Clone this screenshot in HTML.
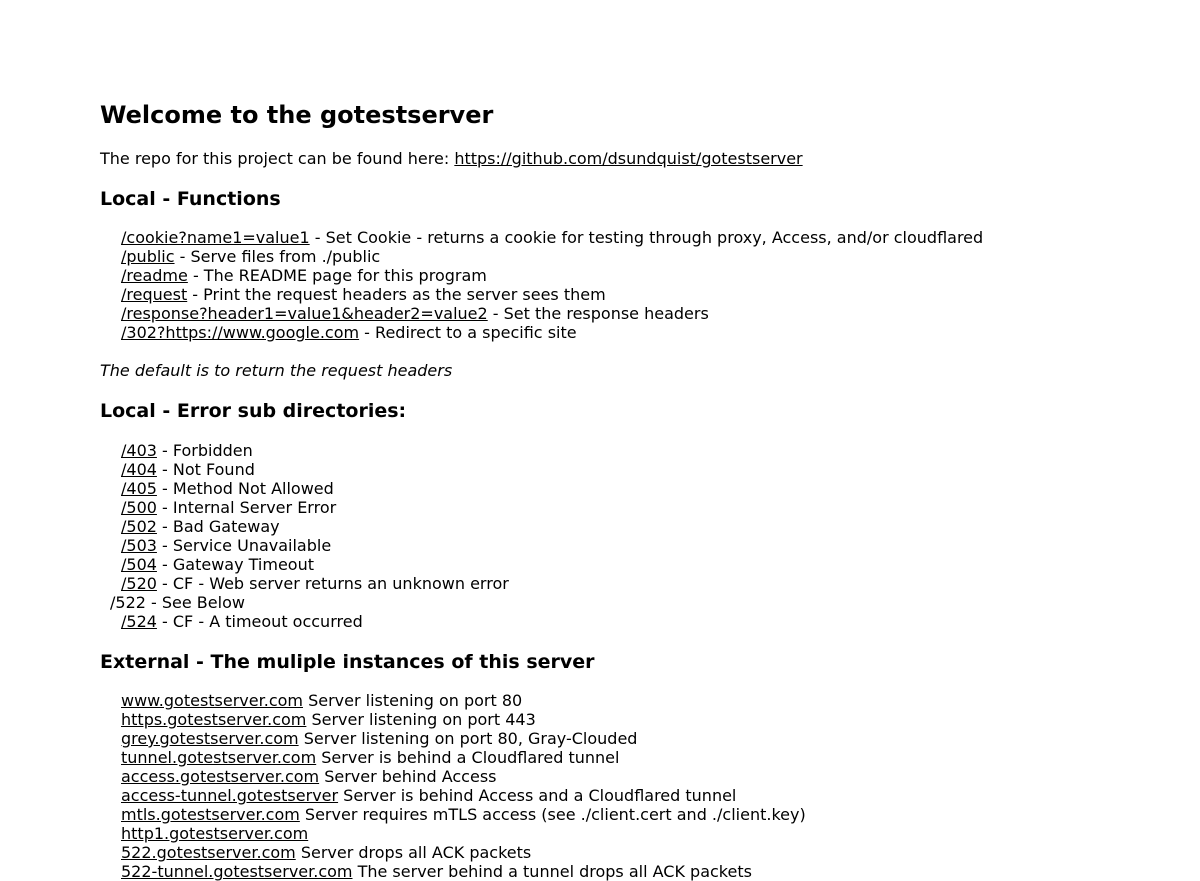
<!DOCTYPE html>
<html><head><meta charset="utf-8"><style>
body{margin:0;background:#fff;font-family:"DejaVu Sans","Liberation Sans",sans-serif;font-size:16px;color:#000;width:1200px;height:881px;overflow:hidden;position:relative}
.b{position:absolute;left:100px;line-height:19px;white-space:nowrap}
h1{font-size:24px;line-height:28px;margin:0}
h3{font-size:19px;line-height:22px;margin:0}
a{color:#000;text-decoration:underline}
.l{padding-left:21px}
</style></head><body>
<div class="b" style="top:101px"><h1>Welcome to the gotestserver</h1></div>
<div class="b" style="top:149px">The repo for this project can be found here: <a href="#">https://github.com/dsundquist/gotestserver</a></div>
<div class="b" style="top:188px"><h3>Local - Functions</h3></div>
<div class="b l" style="top:228px">
<a href="#">/cookie?name1=value1</a> - Set Cookie - returns a cookie for testing through proxy, Access, and/or cloudflared<br>
<a href="#">/public</a> - Serve files from ./public<br>
<a href="#">/readme</a> - The README page for this program<br>
<a href="#">/request</a> - Print the request headers as the server sees them<br>
<a href="#">/response?header1=value1&amp;header2=value2</a> - Set the response headers<br>
<a href="#">/302?https://www.google.com</a> - Redirect to a specific site</div>
<div class="b" style="top:361px"><i>The default is to return the request headers</i></div>
<div class="b" style="top:400px"><h3>Local - Error sub directories:</h3></div>
<div class="b l" style="top:441px">
<a href="#">/403</a> - Forbidden<br>
<a href="#">/404</a> - Not Found<br>
<a href="#">/405</a> - Method Not Allowed<br>
<a href="#">/500</a> - Internal Server Error<br>
<a href="#">/502</a> - Bad Gateway<br>
<a href="#">/503</a> - Service Unavailable<br>
<a href="#">/504</a> - Gateway Timeout<br>
<a href="#">/520</a> - CF - Web server returns an unknown error<br>
<span style="margin-left:-11px">/522 - See Below</span><br>
<a href="#">/524</a> - CF - A timeout occurred</div>
<div class="b" style="top:651px"><h3>External - The muliple instances of this server</h3></div>
<div class="b l" style="top:691px">
<a href="#">www.gotestserver.com</a> Server listening on port 80<br>
<a href="#">https.gotestserver.com</a> Server listening on port 443<br>
<a href="#">grey.gotestserver.com</a> Server listening on port 80, Gray-Clouded<br>
<a href="#">tunnel.gotestserver.com</a> Server is behind a Cloudflared tunnel<br>
<a href="#">access.gotestserver.com</a> Server behind Access<br>
<a href="#">access-tunnel.gotestserver</a> Server is behind Access and a Cloudflared tunnel<br>
<a href="#">mtls.gotestserver.com</a> Server requires mTLS access (see ./client.cert and ./client.key)<br>
<a href="#">http1.gotestserver.com</a><br>
<a href="#">522.gotestserver.com</a> Server drops all ACK packets<br>
<a href="#">522-tunnel.gotestserver.com</a> The server behind a tunnel drops all ACK packets</div>
</body></html>
